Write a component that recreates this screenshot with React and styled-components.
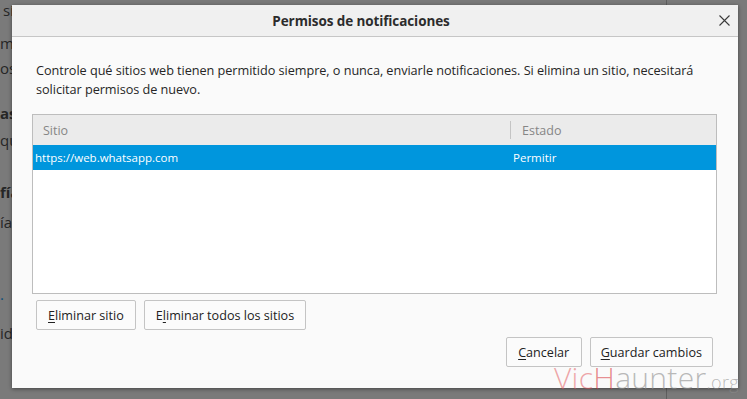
import React from "react";
import styled, { createGlobalStyle } from "styled-components";

const Global = createGlobalStyle`
  html, body { margin: 0; padding: 0; }
  body {
    width: 747px; height: 399px; overflow: hidden; background: #7a7a7a;
    font-family: "Open Sans", "Noto Sans", sans-serif;
  }
`;

const Screen = styled.div`
  position: relative;
  width: 747px;
  height: 399px;
  overflow: hidden;
  background: #7a7a7a;
`;

/* ---------- dimmed page behind the dialog ---------- */
const Page = styled.div`
  display: flex;
  height: 100%;
`;
const PageMain = styled.div`
  flex: 1;
  display: flex;
  flex-direction: column;
  overflow: hidden;
`;
const PageLine = styled.div`
  margin-top: ${(p) => p.$top}px;
  padding-left: ${(p) => p.$indent}px;
  font-size: 15px;
  line-height: 18px;
  color: ${(p) => (p.$blue ? "#0a4f7a" : "#262626")};
  font-weight: ${(p) => (p.$bold ? 700 : 400)};
  white-space: nowrap;
`;
const Sidebar = styled.div`
  width: 80px;
  border-left: 1px solid #5e5e5e;
`;

/* ---------- dialog ---------- */
const Dialog = styled.div`
  position: absolute;
  left: 12px;
  top: 5px;
  width: 726px;
  height: 383px;
  background: #fafafa;
  box-shadow: 0 1px 4px rgba(0, 0, 0, 0.45);
  display: flex;
  flex-direction: column;
`;
const TitleBar = styled.div`
  height: 31px;
  background: #f0f0f0;
  border-bottom: 1px solid #c6c6c6;
  display: flex;
  align-items: center;
`;
const Title = styled.div`
  flex: 1;
  text-align: center;
  font-size: 13.5px;
  font-weight: 700;
  color: #2c2c2c;
  letter-spacing: -0.1px;
`;
const CloseButton = styled.div`
  width: 28px;
  height: 31px;
  display: flex;
  align-items: center;
  justify-content: center;
`;
const Body = styled.div`
  flex: 1;
  display: flex;
  flex-direction: column;
  padding: 24px 21px 0 20px;
`;
const Description = styled.p`
  margin: 0;
  padding: 0 4px;
  font-size: 12.7px;
  line-height: 19px;
  letter-spacing: -0.05px;
  color: #262626;
`;
const Table = styled.div`
  margin-top: 15px;
  height: 180px;
  box-sizing: border-box;
  border: 1px solid #bdbdbd;
  background: #ffffff;
  display: flex;
  flex-direction: column;
`;
const HeaderRow = styled.div`
  height: 30px;
  background: #ebebeb;
  display: flex;
  align-items: center;
`;
const HeaderCell = styled.div`
  width: ${(p) => (p.$w ? `${p.$w}px` : "auto")};
  flex: ${(p) => (p.$w ? "none" : 1)};
  padding-left: ${(p) => p.$pad}px;
  box-sizing: border-box;
  font-size: 12.5px;
  color: #868686;
`;
const Divider = styled.div`
  width: 1px;
  height: 18px;
  background: #c4c4c4;
`;
const Row = styled.div`
  height: 25px;
  display: flex;
  align-items: center;
  background: ${(p) => (p.$selected ? "#0096dd" : "transparent")};
  color: ${(p) => (p.$selected ? "#ffffff" : "#222")};
`;
const Cell = styled.div`
  width: ${(p) => (p.$w ? `${p.$w}px` : "auto")};
  flex: ${(p) => (p.$w ? "none" : 1)};
  padding-left: ${(p) => p.$pad}px;
  box-sizing: border-box;
  font-size: 11.5px;
`;
const ButtonRow = styled.div`
  display: flex;
  gap: 8px;
  padding: 0 4px;
  justify-content: ${(p) => (p.$end ? "flex-end" : "flex-start")};
  margin-top: ${(p) => (p.$end ? 7 : 6)}px;
`;
const Button = styled.div`
  height: 30px;
  min-width: 76px;
  box-sizing: border-box;
  padding: 0 ${(p) => (p.$pad ? p.$pad : 11)}px;
  border: 1px solid #c4c4c4;
  border-radius: 2px;
  background: #fbfbfb;
  display: flex;
  align-items: center;
  justify-content: center;
  font-size: 12.6px;
  color: #222;
  white-space: nowrap;
`;
const Key = styled.span`
  text-decoration: underline;
  text-underline-offset: 2px;
`;

/* ---------- watermark ---------- */
const Watermark = styled.div`
  position: absolute;
  left: 554px;
  top: 367px;
  font-family: "Open Sans", sans-serif;
  font-weight: 300;
  font-size: 30px;
  line-height: 22px;
  letter-spacing: 0.3px;
  white-space: nowrap;
  color: rgba(140, 140, 140, 0.6);
  pointer-events: none;
`;
const Mark = styled.span`
  color: ${(p) => p.$c || "inherit"};
  font-size: ${(p) => (p.$small ? "18px" : "inherit")};
`;

export default function App() {
  return (
    <>
      <Global />
      <Screen>
        <Page>
          <PageMain>
            <PageLine $top={1} $indent={3}>si</PageLine>
            <PageLine $top={15} $indent={0}>m</PageLine>
            <PageLine $top={7} $indent={0}>os</PageLine>
            <PageLine $top={27} $indent={0} $bold>as</PageLine>
            <PageLine $top={9} $indent={0}>qu</PageLine>
            <PageLine $top={34} $indent={0} $bold>fía</PageLine>
            <PageLine $top={12} $indent={0}>ía</PageLine>
            <PageLine $top={58} $indent={0} $blue>·</PageLine>
            <PageLine $top={17} $indent={0}>id</PageLine>
          </PageMain>
          <Sidebar />
        </Page>

        <Dialog>
          <TitleBar>
            <Title>Permisos de notificaciones</Title>
            <CloseButton>
              <svg width="11" height="11" viewBox="0 0 11 11">
                <path d="M0.5 0.5 L10.5 10.5 M10.5 0.5 L0.5 10.5" stroke="#3a3a3a" strokeWidth="1.1" />
              </svg>
            </CloseButton>
          </TitleBar>
          <Body>
            <Description>
              Controle qué sitios web tienen permitido siempre, o nunca, enviarle notificaciones. Si elimina un sitio, necesitará
              solicitar permisos de nuevo.
            </Description>
            <Table>
              <HeaderRow>
                <HeaderCell $w={477} $pad={10}>Sitio</HeaderCell>
                <Divider />
                <HeaderCell $pad={11}>Estado</HeaderCell>
              </HeaderRow>
              <Row $selected>
                <Cell $w={478} $pad={2}>https://web.whatsapp.com</Cell>
                <Cell $pad={2}>Permitir</Cell>
              </Row>
            </Table>
            <ButtonRow>
              <Button>
                <Key>E</Key>liminar sitio
              </Button>
              <Button>
                E<Key>l</Key>iminar todos los sitios
              </Button>
            </ButtonRow>
            <ButtonRow $end>
              <Button>
                <Key>C</Key>ancelar
              </Button>
              <Button $pad={10}>
                <Key>G</Key>uardar cambios
              </Button>
            </ButtonRow>
          </Body>
        </Dialog>

        <Watermark>
          <Mark $c="rgba(225, 80, 85, 0.5)">Vic</Mark>
          <Mark $c="rgba(215, 50, 55, 0.55)">H</Mark>
          aunter
          <Mark $small>.org</Mark>
        </Watermark>
      </Screen>
    </>
  );
}
